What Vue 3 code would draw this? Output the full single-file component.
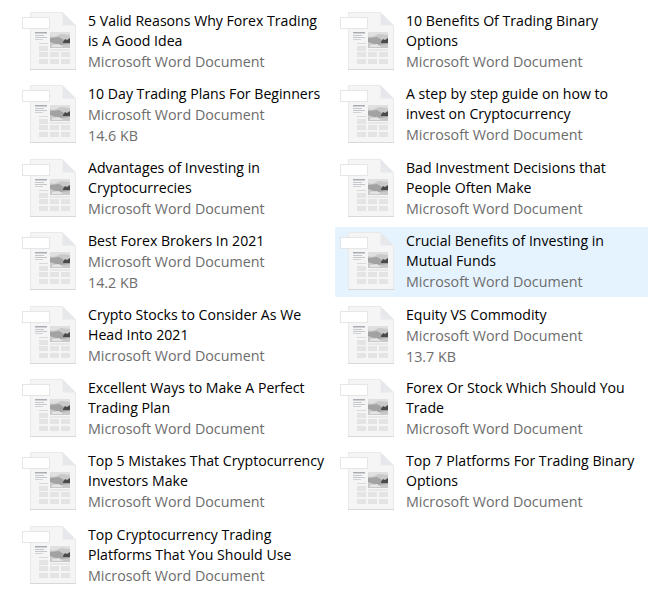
<script setup>
const word = 'Microsoft Word Document'

const files = [
  { name: '5 Valid Reasons Why Forex Trading is A Good Idea' },
  { name: '10 Benefits Of Trading Binary Options' },
  { name: '10 Day Trading Plans For Beginners', size: '14.6 KB' },
  { name: 'A step by step guide on how to invest on Cryptocurrency' },
  { name: 'Advantages of Investing in Cryptocurrecies' },
  { name: 'Bad Investment Decisions that People Often Make' },
  { name: 'Best Forex Brokers In 2021', size: '14.2 KB' },
  { name: 'Crucial Benefits of Investing in Mutual Funds', selected: true },
  { name: 'Crypto Stocks to Consider As We Head Into 2021' },
  { name: 'Equity VS Commodity', size: '13.7 KB' },
  { name: 'Excellent Ways to Make A Perfect Trading Plan' },
  { name: 'Forex Or Stock Which Should You Trade' },
  { name: 'Top 5 Mistakes That Cryptocurrency Investors Make' },
  { name: 'Top 7 Platforms For Trading Binary Options' },
  { name: 'Top Cryptocurrency Trading Platforms That You Should Use' },
]

// cells of the little table in the document thumbnail
const cells = [
  [22, 39], 
  [22, 45], [33, 45], [44, 45],
  [22, 52], [33, 52], [44, 52],
]
</script>

<template>
  <div class="list">
    <div
      v-for="file in files"
      :key="file.name"
      class="item"
      :class="{ selected: file.selected }"
    >
      <svg class="icon" width="64" height="70" viewBox="0 0 64 70">
        <path d="M13.5 5.5H45.5L58.5 18.5V62.5H13.5Z" fill="#f5f5f5" stroke="#e9e9e9" />
        <path d="M45.5 5.5V18.5H58.5Z" fill="#e6e8ec" />
        <rect x="13" y="62" width="46" height="1" fill="#d8d8d8" />
        <rect x="5.5" y="10.5" width="27" height="11" fill="#ffffff" stroke="#e6e6e6" />
        <rect x="18" y="25" width="12" height="1.5" fill="#a9aeb5" />
        <rect x="18" y="28" width="9" height="1" fill="#c4c8cc" />
        <rect x="18" y="30" width="12" height="1" fill="#c4c8cc" />
        <rect x="18" y="32" width="8" height="1" fill="#d0d3d6" />
        <rect x="22" y="36" width="9" height="1" fill="#dadada" />
        <rect x="33" y="25" width="20" height="16" fill="#c9c9c9" />
        <path d="M33 25H53V28L44 27L37 30L33 29Z" fill="#e0e0e0" />
        <path d="M33 31L42 30L47 33H53V37L42 38L33 35Z" fill="#a2a2a2" />
        <path d="M46 35L48 32L50 33L53 31V36H46Z" fill="#4a4a4a" />
        <path d="M35 38L42 37L46 40H35Z" fill="#e4e4e4" />
        <rect x="33" y="42.5" width="20" height="1" fill="#dcdcdc" />
        <rect
          v-for="cell in cells"
          :key="cell.join()"
          :x="cell[0]"
          :y="cell[1]"
          width="9"
          height="5"
          fill="#e4e4e4"
        />
      </svg>
      <div class="text">
        <div class="name">{{ file.name }}</div>
        <div class="meta">{{ word }}</div>
        <div v-if="file.size" class="meta">{{ file.size }}</div>
      </div>
    </div>
  </div>
</template>

<style>
html,
body {
  background: #ffffff;
}
</style>

<style scoped>
.list {
  width: 636px;
  margin-left: 17px;
  padding-top: 7px;
  display: grid;
  grid-template-columns: 313px 313px;
  grid-auto-rows: 70px;
  column-gap: 5px;
  row-gap: 3.4px;
  font-family: "Open Sans", "Noto Sans", sans-serif;
  line-height: 20px;
}

.item {
  display: flex;
  overflow: hidden;
}

.item.selected {
  background: #e5f3ff;
}

.icon {
  flex: none;
}

.text {
  width: 238px;
  margin-left: 7px;
  padding-top: 4px;
}

.name {
  color: #000000;
  font-size: 14.12px;
}

.meta {
  margin-top: 1px;
  color: #6d6d6d;
  font-size: 14.3px;
}
</style>
